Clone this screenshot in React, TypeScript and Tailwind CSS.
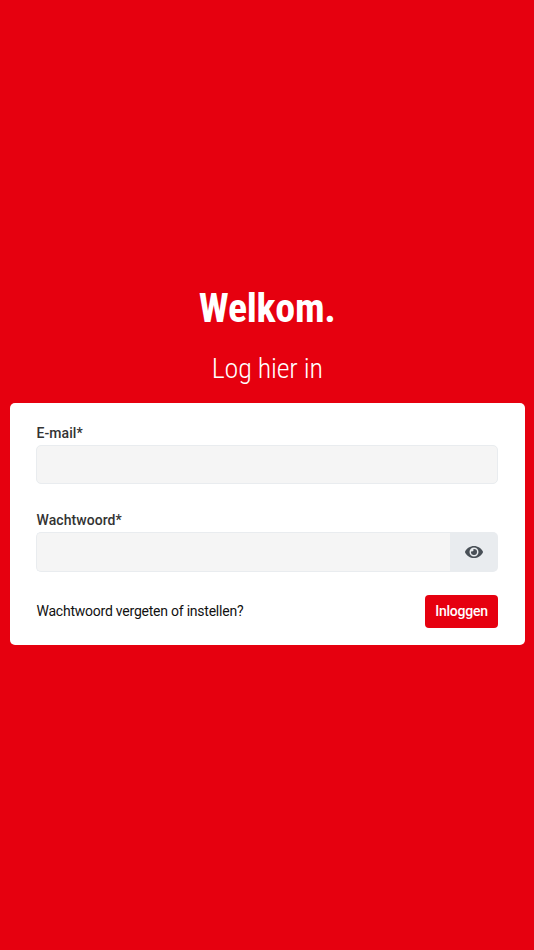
import { useState } from 'react';
import { FaEye } from 'react-icons/fa';

export default function App() {
  const [visible, setVisible] = useState(false);

  return (
    <main className="flex min-h-screen flex-col items-center bg-[#e6000f] pr-[9px] pl-[9.5px] pt-[285px] font-['Roboto',sans-serif] text-[#333]">
      <h1 className="font-['Roboto_Condensed','Roboto',sans-serif] text-[40px] leading-[48px] font-bold tracking-[-0.3px] text-white [font-stretch:75%]">
        Welkom.
      </h1>
      <h2 className="mt-[19px] font-['Roboto_Condensed','Roboto',sans-serif] text-[28px] leading-[34px] font-light tracking-[-0.2px] text-white [font-stretch:75%]">
        Log hier in
      </h2>
      <form className="mt-[16.7px] h-[242.5px] w-full rounded-[5px] bg-white pr-[27px] pl-[26.5px] pt-[20px]" onSubmit={(e) => e.preventDefault()}>
        <label htmlFor="email" className="block pl-[0.5px] text-[14px] leading-[21px] font-medium tracking-[0.06px]">E-mail*</label>
        <input id="email" type="email" className="mt-[1px] block h-[39px] w-full rounded-[5px] border border-[#e9ecef] bg-[#f5f5f5] px-3 outline-none" />
        <label htmlFor="password" className="mt-[26px] block pl-[0.5px] text-[14px] leading-[21px] font-medium tracking-[0.06px]">Wachtwoord*</label>
        <div className="mt-[1px] flex h-[40px]">
          <input id="password" type={visible ? 'text' : 'password'} className="min-w-0 flex-1 rounded-l-[5px] border border-r-0 border-[#e9ecef] bg-[#f5f5f5] px-3 outline-none" />
          <button type="button" aria-label="Toon wachtwoord" onClick={() => setVisible(!visible)} className="flex w-[48px] items-center justify-center rounded-r-[5px] bg-[#e9ecef] text-[#495057]">
            <FaEye size={18} />
          </button>
        </div>
        <div className="mt-[23px] flex items-center justify-between">
          <a href="#" className="pl-[0.5px] text-[14px] leading-[21px] tracking-[-0.23px] text-[#111]">Wachtwoord vergeten of instellen?</a>
          <button type="submit" className="h-[33px] w-[73px] rounded bg-[#e6000f] text-[14px] font-medium tracking-[-0.25px] text-white">Inloggen</button>
        </div>
      </form>
    </main>
  );
}
